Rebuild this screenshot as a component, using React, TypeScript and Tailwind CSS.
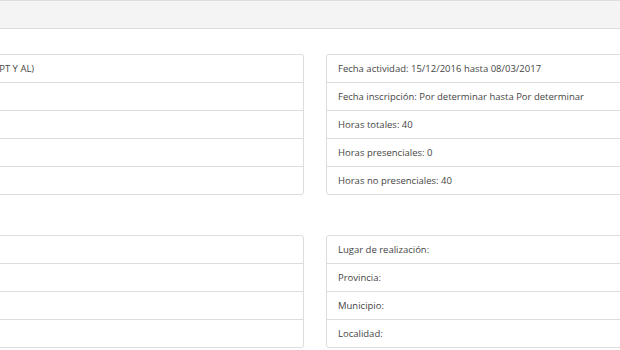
const datosGenerales = [
  "Destinatarios: Profesorado de Educación Especial (PT Y AL)",
  "",
  "",
  "",
  "",
];

const fechas = [
  "Fecha actividad: 15/12/2016 hasta 08/03/2017",
  "Fecha inscripción: Por determinar hasta Por determinar",
  "Horas totales: 40",
  "Horas presenciales: 0",
  "Horas no presenciales: 40",
];

const organizacion = ["", "", "", ""];

const lugar = ["Lugar de realización:", "Provincia:", "Municipio:", "Localidad:"];

function ListGroup({ items, className }: { items: string[]; className: string }) {
  return (
    <ul className={`flex flex-col shrink-0 ${className}`}>
      {items.map((text, i) => (
        <li
          key={i}
          className={`h-[29px] -mb-px border border-[#dddddd] bg-white px-[11px] flex items-center whitespace-nowrap text-[#454545] ${
            i === 0 ? "rounded-t-[3px]" : ""
          } ${i === items.length - 1 ? "rounded-b-[3px] mb-0" : ""}`}
        >
          {text}
        </li>
      ))}
    </ul>
  );
}

export default function App() {
  return (
    <div
      className="w-[620px] h-[350px] overflow-hidden bg-white text-[9.5px] leading-[14px]"
      style={{ fontFamily: '"Open Sans", "Liberation Sans", sans-serif' }}
    >
      {/* barra superior */}
      <div className="h-[29px] bg-[#f4f4f4] border-y border-[#dddddd]" />

      <div className="-ml-[236px] pt-[25px] flex flex-col gap-[40px]">
        <div className="flex gap-[22px]">
          <ListGroup items={datosGenerales} className="w-[540px]" />
          <ListGroup items={fechas} className="w-[540px]" />
        </div>
        <div className="flex gap-[22px]">
          <ListGroup items={organizacion} className="w-[540px]" />
          <ListGroup items={lugar} className="w-[540px]" />
        </div>
      </div>
    </div>
  );
}
